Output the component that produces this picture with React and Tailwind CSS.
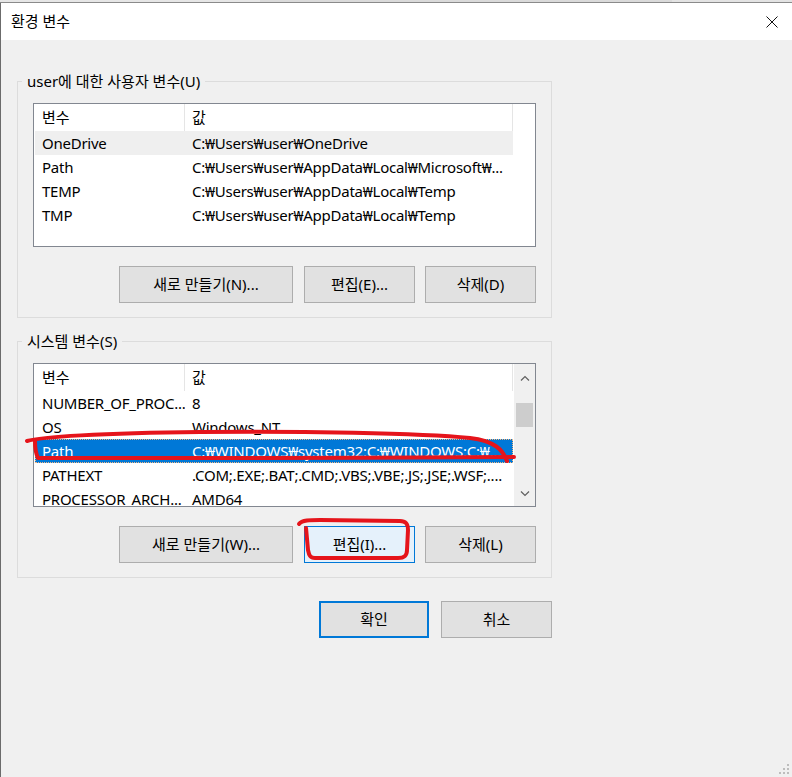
import React from "react";

const userVars = [
  ["OneDrive", "C:₩Users₩user₩OneDrive"],
  ["Path", "C:₩Users₩user₩AppData₩Local₩Microsoft₩..."],
  ["TEMP", "C:₩Users₩user₩AppData₩Local₩Temp"],
  ["TMP", "C:₩Users₩user₩AppData₩Local₩Temp"],
];

const systemVars = [
  ["NUMBER_OF_PROC...", "8"],
  ["OS", "Windows_NT"],
  ["Path", "C:₩WINDOWS₩system32;C:₩WINDOWS;C:₩..."],
  ["PATHEXT", ".COM;.EXE;.BAT;.CMD;.VBS;.VBE;.JS;.JSE;.WSF;...."],
  ["PROCESSOR_ARCH...", "AMD64"],
];

const Header = () => (
  <div className="h-[27px] flex shrink-0">
    <div className="w-[151px] border-r border-[#e5e5e5] pl-[8px] flex items-center">변수</div>
    <div className="w-[328px] border-r border-[#e5e5e5] pl-[7px] flex items-center">값</div>
  </div>
);

const Row = ({ name, value, hover, selected }) => (
  <div
    className={
      "h-[24px] ml-[1px] w-[478px] flex items-center shrink-0 tracking-[-0.25px] " +
      (selected
        ? "bg-[#0078d7] text-white outline-1 outline-dotted -outline-offset-1 outline-[#f3b680]"
        : hover
        ? "bg-[#efefef]"
        : "")
    }
  >
    <div className="w-[150px] pl-[7px] whitespace-nowrap overflow-hidden">{name}</div>
    <div className="w-[328px] pl-[7px] whitespace-nowrap overflow-hidden">{value}</div>
  </div>
);

const WinButton = ({ children, width = "w-[111px]", variant }) => (
  <button
    className={
      "h-[37px] flex items-center justify-center text-[15px] text-black " +
      width +
      " " +
      (variant === "focus"
        ? "bg-[#e5f1fb] border border-[#0078d7]"
        : variant === "default"
        ? "bg-[#e1e1e1] border-2 border-[#0078d7]"
        : "bg-[#e1e1e1] border border-[#adadad]")
    }
  >
    {children}
  </button>
);

const Chevron = ({ up }) => (
  <svg width="10" height="6" viewBox="0 0 10 6" className="text-[#606060]">
    <path
      d={up ? "M1 5.5 L5 1.5 L9 5.5" : "M1 0.5 L5 4.5 L9 0.5"}
      stroke="currentColor"
      strokeWidth="1.2"
      fill="none"
    />
  </svg>
);

const GroupBox = ({ title, children }) => (
  <fieldset className="w-[535px] border border-[#dcdcdc] px-[15px] pb-[14px]">
    <legend className="-ml-[11px] px-[5px] leading-[20px]">{title}</legend>
    {children}
  </fieldset>
);

export default function App() {
  return (
    <div
      className="w-[792px] h-[777px] bg-[#f0f0f0] relative overflow-hidden flex flex-col text-[15px] text-black"
      style={{ fontFamily: '"Noto Sans", "Noto Sans CJK KR", sans-serif' }}
    >
      {/* strip of whatever is behind the window */}
      <div className="h-[3px] shrink-0 flex">
        <div className="w-[260px] bg-[#e6e6e6] border-b border-[#8a8a8a]" />
        <div className="flex-1 bg-[#dadada] border-b border-[#8a8a8a]" />
        <div className="w-[120px] bg-[#e3e3e3] border-b border-[#8a8a8a]" />
      </div>

      <div className="flex-1 flex flex-col border-l border-[#6b6b6b]">
        {/* title bar */}
        <div className="h-[37px] bg-white flex items-center justify-between shrink-0">
          <span className="pl-[10px] text-[15px]">환경 변수</span>
          <svg width="12" height="12" viewBox="0 0 12 12" className="mr-[14px]">
            <path d="M0.5 0.5 L11.5 11.5 M11.5 0.5 L0.5 11.5" stroke="#111" strokeWidth="1" />
          </svg>
        </div>

        <div className="flex flex-col pl-[16px] pt-[31px]">
          <GroupBox title="user에 대한 사용자 변수(U)">
            <div className="mt-[12px] h-[144px] border border-[#828790] bg-white flex flex-col overflow-hidden">
              <Header />
              {userVars.map(([n, v], i) => (
                <Row key={n} name={n} value={v} hover={i === 0} />
              ))}
            </div>
            <div className="mt-[19px] flex justify-end">
              <WinButton width="w-[174px]">새로 만들기(N)...</WinButton>
              <div className="w-[11px]" />
              <WinButton>편집(E)...</WinButton>
              <div className="w-[10px]" />
              <WinButton>삭제(D)</WinButton>
            </div>
          </GroupBox>

          <div className="mt-[13px]">
            <GroupBox title="시스템 변수(S)">
              <div className="mt-[12px] h-[144px] border border-[#828790] bg-white flex overflow-hidden">
                <div className="flex-1 flex flex-col overflow-hidden">
                  <Header />
                  {systemVars.map(([n, v]) => (
                    <Row key={n} name={n} value={v} selected={n === "Path"} />
                  ))}
                </div>
                <div className="w-[21px] bg-[#f0f0f0] flex flex-col items-center">
                  <div className="h-[27px] flex items-center justify-center">
                    <Chevron up />
                  </div>
                  <div className="mt-[12px] h-[24px] w-[17px] bg-[#cdcdcd]" />
                  <div className="flex-1" />
                  <div className="h-[24px] flex items-center justify-center">
                    <Chevron />
                  </div>
                </div>
              </div>
              <div className="mt-[19px] flex justify-end">
                <WinButton width="w-[174px]">새로 만들기(W)...</WinButton>
                <div className="w-[11px]" />
                <WinButton variant="focus">편집(I)...</WinButton>
                <div className="w-[10px]" />
                <WinButton>삭제(L)</WinButton>
              </div>
            </GroupBox>
          </div>

          <div className="w-[535px] mt-[23px] flex justify-end gap-[12px]">
            <WinButton width="w-[110px]" variant="default">확인</WinButton>
            <WinButton>취소</WinButton>
          </div>
        </div>
      </div>

      {/* hand-drawn red marks */}
      <svg
        className="absolute inset-0 pointer-events-none"
        width="792"
        height="777"
        viewBox="0 0 792 777"
        fill="none"
        stroke="#e5141b"
        strokeWidth="4"
        strokeLinecap="round"
        strokeLinejoin="round"
      >
        <path d="M27,441 C40,437 100,433 200,432 C300,431 420,433 470,438 C495,441 503,450 507,461" />
        <path d="M35,441 C35,448 36,454 38,458 C150,459 350,458 514,457" />
        <path d="M299,524 C302,520 310,520 320,520 L400,521 C406,521 408,524 408,530 L407,550 C407,556 404,558 398,558 L315,558 C310,558 309,555 308,550 L306,528" />
      </svg>

      {/* resize grip */}
      <svg className="absolute right-[2px] bottom-[2px]" width="11" height="11" viewBox="0 0 11 11" fill="#bdbdbd">
        <rect x="8" y="0" width="2" height="2" />
        <rect x="8" y="4" width="2" height="2" />
        <rect x="4" y="4" width="2" height="2" />
        <rect x="8" y="8" width="2" height="2" />
        <rect x="4" y="8" width="2" height="2" />
        <rect x="0" y="8" width="2" height="2" />
      </svg>
    </div>
  );
}
